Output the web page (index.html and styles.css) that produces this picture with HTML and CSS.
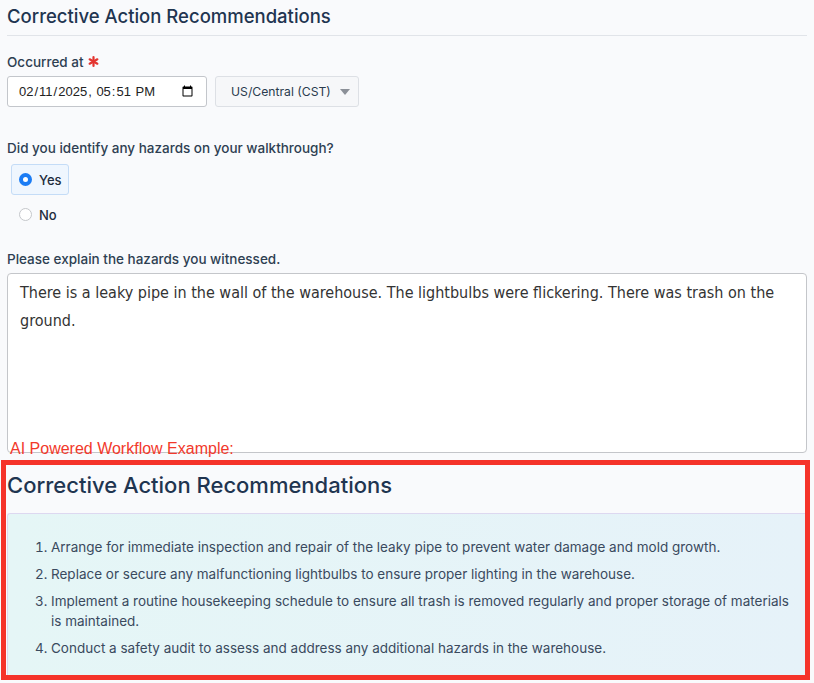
FILE: index.html
```html
<!DOCTYPE html>
<html lang="en">
<head>
<meta charset="utf-8">
<title>Corrective Action Recommendations</title>
<link rel="stylesheet" href="styles.css">
</head>
<body>
<div class="page">
  <h1 class="title">Corrective Action Recommendations</h1>

  <div class="field">
    <label class="label">Occurred at <svg class="req" viewBox="0 0 12 12" width="11" height="11"><g stroke="#e3342f" stroke-width="2.4" stroke-linecap="round"><line x1="6" y1="1.2" x2="6" y2="10.8"/><line x1="1.8" y1="3.6" x2="10.2" y2="8.4"/><line x1="1.8" y1="8.4" x2="10.2" y2="3.6"/></g></svg></label>
    <div class="datetime-row">
      <input class="date-input" type="datetime-local" value="2025-02-11T17:51">
      <div class="tz-button">US/Central (CST)<svg class="caret" viewBox="0 0 10 6" width="10" height="6"><path d="M0 0h10L5 6z" fill="#8b9098"/></svg></div>
    </div>
  </div>

  <div class="field field-question">
    <div class="label">Did you identify any hazards on your walkthrough?</div>
    <div class="radio-list">
      <div class="radio-row selected"><span class="radio on"></span><span class="radio-text">Yes</span></div>
      <div class="radio-row"><span class="radio"></span><span class="radio-text">No</span></div>
    </div>
  </div>

  <div class="field field-explain">
    <div class="label">Please explain the hazards you witnessed.</div>
    <div class="textarea-wrap">
      <div class="textarea">There is a leaky pipe in the wall of the warehouse. The lightbulbs were flickering. There was trash on the ground.</div>
      <div class="ai-note">AI Powered Workflow Example:</div>
    </div>
  </div>

  <div class="ai-box">
    <h2 class="ai-title">Corrective Action Recommendations</h2>
    <div class="ai-panel">
      <ol class="ai-list">
        <li>Arrange for immediate inspection and repair of the leaky pipe to prevent water damage and mold growth.</li>
        <li>Replace or secure any malfunctioning lightbulbs to ensure proper lighting in the warehouse.</li>
        <li>Implement a routine housekeeping schedule to ensure all trash is removed regularly and proper storage of materials is maintained.</li>
        <li>Conduct a safety audit to assess and address any additional hazards in the warehouse.</li>
      </ol>
    </div>
  </div>
</div>
</body>
</html>
```

FILE: styles.css
```css
* { box-sizing: border-box; }

html, body {
  margin: 0;
  padding: 0;
  background: #f9fafc;
}

body {
  font-family: Inter, "Noto Sans", "Liberation Sans", sans-serif;
  color: #2c3e50;
}

.page {
  padding: 0 7px;
  width: 814px;
}

.title {
  margin: 0;
  padding: 4px 0 7px;
  font-size: 18.5px;
  line-height: 24px;
  font-weight: 500;
  color: #1f3550;
  border-bottom: 1px solid #e1e4e9;
}

.field {
  margin-top: 16px;
}

.label {
  display: flex;
  align-items: center;
  gap: 4px;
  font-size: 13.5px;
  line-height: 20px;
  font-weight: 500;
  color: #2e3f52;
}

.req { margin-top: -2px; }

.datetime-row {
  display: flex;
  gap: 8px;
  margin-top: 4px;
}

.date-input {
  width: 200px;
  height: 31px;
  margin: 0;
  padding: 0 10px 0 10px;
  border: 1px solid #c3c6cb;
  border-radius: 3px;
  background: #fff;
  font-family: "Liberation Sans", Arial, sans-serif;
  font-size: 13px;
  color: #222;
}

.tz-button {
  display: flex;
  align-items: center;
  gap: 9px;
  height: 31px;
  padding: 0 8px 0 15px;
  white-space: nowrap;
  border: 1px solid #dde0e5;
  border-radius: 3px;
  background: #f6f7f9;
  font-size: 12.2px;
  color: #2a3b4e;
}

.caret { flex: none; }

.field-question { margin-top: 31px; }

.radio-list {
  display: flex;
  flex-direction: column;
  gap: 4px;
  margin-top: 6px;
}

.radio-row {
  display: flex;
  align-items: center;
  gap: 7px;
  align-self: flex-start;
  height: 31px;
  margin-left: 4px;
  padding: 0 6px 0 7px;
  border: 1px solid transparent;
  border-radius: 3px;
}

.radio-row.selected {
  background: #eff6fe;
  border-color: #c4dcf7;
}

.radio {
  display: block;
  width: 13px;
  height: 13px;
  border-radius: 50%;
  border: 1px solid #c5c7cb;
  background: #fff;
}

.radio.on {
  border: 4px solid #1b7cf4;
}

.radio-text {
  font-size: 13px;
  font-weight: 500;
  color: #1e2c3c;
}

.field-explain { margin-top: 19px; }

.textarea-wrap {
  position: relative;
  margin-top: 4px;
}

.textarea {
  height: 180px;
  padding: 5px 12px;
  border: 1px solid #c4c6ca;
  border-radius: 4px;
  background: #fff;
  font-family: "DejaVu Sans Condensed", "Liberation Sans", sans-serif;
  font-size: 16px;
  line-height: 28px;
  color: #333;
}

.ai-note {
  position: absolute;
  left: 3px;
  bottom: -5px;
  font-family: "Liberation Sans", Arial, sans-serif;
  font-size: 16px;
  line-height: 18px;
  color: #f2392b;
}

.ai-box {
  margin: 7px -3px 0 -6px;
  border: 5px solid #f5332a;
  background: #f9fafc;
}

.ai-title {
  margin: 0;
  padding: 5px 1px 0;
  height: 48px;
  font-size: 22px;
  line-height: 30px;
  font-weight: 500;
  color: #1f3550;
}

.ai-panel {
  margin-left: 1px;
  border-top: 1px solid #ddd8f0;
  border-left: 1px solid #ddd8f0;
  border-top-left-radius: 3px;
  background: linear-gradient(90deg, #e5f6f6 0%, #e6f2f9 100%);
  padding: 23px 10px 10px 0;
}

.ai-list {
  margin: 0;
  padding-left: 43px;
  font-size: 13.5px;
  line-height: 20px;
  color: #3a4a5e;
}

.ai-list li {
  margin-bottom: 7px;
}
```
